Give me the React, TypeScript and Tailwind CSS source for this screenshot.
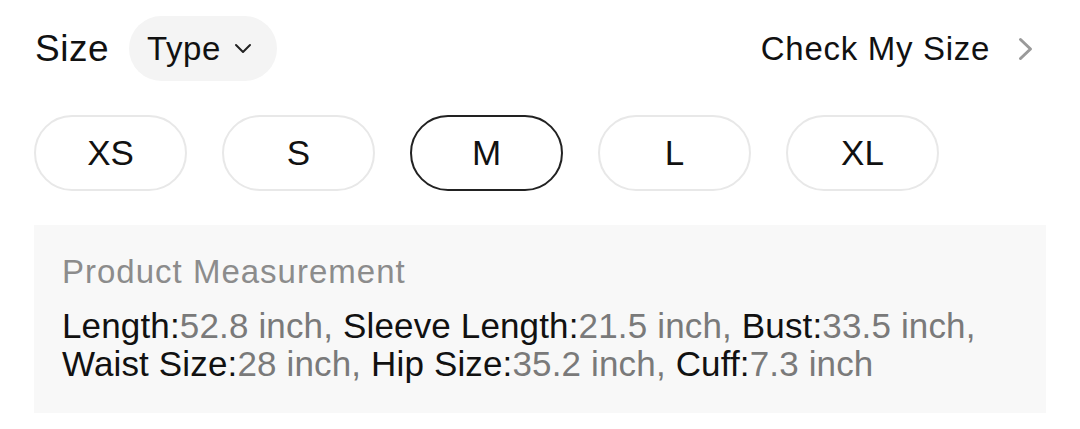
import React from "react";

const sizes = ["XS", "S", "M", "L", "XL"];
const items: [string, string][] = [
  ["Length:", "52.8 inch"],
  ["Sleeve Length:", "21.5 inch"],
  ["Bust:", "33.5 inch"],
  ["Waist Size:", "28 inch"],
  ["Hip Size:", "35.2 inch"],
  ["Cuff:", "7.3 inch"],
];

function Item({ k, v, last }: { k: string; v: string; last?: boolean }) {
  return (
    <>
      <span className="text-[#111]">{k}</span>
      <span className="text-[#7a7a7a]">
        {v}
        {last ? "" : ","}
      </span>{" "}
    </>
  );
}

export default function App() {
  return (
    <div
      className="w-[1080px] h-[429px] bg-white overflow-hidden"
      style={{ fontFamily: "'Liberation Sans', Arial, sans-serif" }}
    >
      <div className="flex items-center justify-between pl-[35px] pr-[47px] pt-[16px] h-[81px]">
        <div className="flex items-center gap-[20px]">
          <span className="text-[37px] tracking-[0.5px] text-[#111] leading-none">Size</span>
          <div className="flex items-center h-[65px] rounded-full bg-[#f4f4f4] pl-[18px] pr-[25px] gap-[13px]">
            <span className="text-[33px] tracking-[0.6px] text-[#111] leading-none">Type</span>
            <svg width="18" height="11" viewBox="0 0 18 11" fill="none">
              <path d="M2 2l7 7 7-7" stroke="#222" strokeWidth="2" strokeLinecap="round" strokeLinejoin="round" />
            </svg>
          </div>
        </div>
        <div className="flex items-center gap-[28px]">
          <span className="text-[33px] tracking-[0.7px] text-[#111] leading-none">Check My Size</span>
          <svg width="15" height="24" viewBox="0 0 15 24" fill="none">
            <path d="M2.5 2.5l10 9.5-10 9.5" stroke="#9a9a9a" strokeWidth="3" strokeLinecap="round" strokeLinejoin="round" />
          </svg>
        </div>
      </div>
      <div className="flex gap-[35px] pl-[34px] mt-[34px]">
        {sizes.map((s) => (
          <div
            key={s}
            className={`w-[153px] h-[76px] rounded-full flex items-center justify-center text-[35px] text-[#111] border-2 ${
              s === "M" ? "border-[#222]" : "border-[#e8e8e8]"
            }`}
          >
            {s}
          </div>
        ))}
      </div>
      <div className="mx-[34px] mt-[34px] h-[188px] bg-[#f8f8f8] pl-[28px] pr-[30px] pt-[27px]">
        <div className="text-[33px] tracking-[1px] text-[#8c8c8c] leading-[40px]">Product Measurement</div>
        <div className="mt-[15px] text-[35px] tracking-[0.15px] leading-[38px]">
          {items.map(([k, v], i) => (
            <Item key={k} k={k} v={v} last={i === items.length - 1} />
          ))}
        </div>
      </div>
    </div>
  );
}
